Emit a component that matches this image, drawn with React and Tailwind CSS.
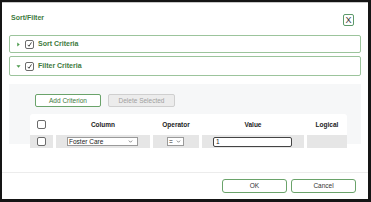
import { useState } from 'react'

const font = { fontFamily: '"Liberation Sans", Arial, sans-serif' }

function Check({ checked }) {
  return (
    <span className="flex h-[9px] w-[9px] items-center justify-center rounded-[2px] border border-[#6b6b6b] bg-white">
      {checked && (
        <svg viewBox="0 0 10 10" className="h-[7px] w-[7px]">
          <path d="M2.5 5.5 L4.3 7.5 L7.8 2" fill="none" stroke="#333" strokeWidth="1.3" />
        </svg>
      )}
    </span>
  )
}

function Caret() {
  return (
    <svg viewBox="0 0 6 4" className="h-[3px] w-[5px]">
      <path d="M0.8 0.8 L3 3 L5.2 0.8" fill="none" stroke="#555" strokeWidth="0.9" />
    </svg>
  )
}

function PanelHeader({ label, open }) {
  return (
    <div className="flex h-full items-center gap-[4px] pl-[6px]">
      <svg viewBox="0 0 6 6" className="h-[5px] w-[5px]">
        {open ? (
          <path d="M0.5 1.5 L5.5 1.5 L3 4.5 Z" fill="#4c9a4c" />
        ) : (
          <path d="M1.5 0.5 L4.5 3 L1.5 5.5 Z" fill="#4c9a4c" />
        )}
      </svg>
      <Check checked />
      <span className="text-[7px] font-bold text-[#3e7a3e]">{label}</span>
    </div>
  )
}

const cols = 'grid grid-cols-[23px_94px_46px_102px_40px] gap-x-[3px]'

export default function App() {
  const [column] = useState('Foster Care')

  return (
    <div
      className="h-[202px] w-[371px] bg-[#151515] pb-[3px] pl-[2px] pr-[3px] pt-[2px]"
      style={font}
    >
      <div className="flex h-full flex-col border-t border-[#c8c8c8] bg-white">
        <div className="flex h-[30px] items-center justify-between pl-[9px] pr-[14px]">
          <span className="text-[7px] font-bold text-[#3e7a3e]">Sort/Filter</span>
          <span className="mt-[4px] flex h-[12px] w-[11px] items-center justify-center rounded-[2px] border border-[#5d9a6a] text-[9px] leading-none text-[#3a3a3a]">
            X
          </span>
        </div>

        <div className="flex flex-col px-[7px]">
          <div className="mt-[2px] h-[18px] rounded-[2px] border border-[#9cc49c]">
            <PanelHeader label="Sort Criteria" />
          </div>
          <div className="mt-[3px] h-[20px] rounded-[2px] border border-[#9cc49c]">
            <PanelHeader label="Filter Criteria" open />
          </div>

          <div className="mt-[8px] h-[60px] bg-[#f6f7f8] pl-[21px] pr-[14px]">
            <div className="flex gap-[7px] pl-[5px] pt-[10px]">
              <span className="flex h-[13px] w-[66px] items-center justify-center rounded-[2px] border border-[#6aa36a] bg-white text-[6.5px] text-[#3e7a3e]">
                Add Criterion
              </span>
              <span className="flex h-[13px] w-[67px] items-center justify-center rounded-[2px] border border-[#cfcfcf] bg-[#ececec] text-[6.5px] text-[#a0a0a0]">
                Delete Selected
              </span>
            </div>
            <div className="mt-[7px] w-[317px] rounded-[3px] bg-white">
              <div className={`${cols} h-[21px] items-center text-[6.5px] font-bold text-[#222]`}>
                <span className="flex justify-center">
                  <Check />
                </span>
                <span className="text-center">Column</span>
                <span className="text-center">Operator</span>
                <span className="text-center">Value</span>
                <span className="text-center">Logical</span>
              </div>
              <div className={`${cols} h-[13px] text-[6.5px] text-[#222]`}>
                <span className="flex items-center justify-center bg-[#e6e6e6]">
                  <Check />
                </span>
                <span className="flex items-center bg-[#e6e6e6] pl-[11px]">
                  <span className="flex h-[9px] w-[71px] items-center justify-between border border-[#9a9a9a] bg-white pl-[1px] pr-[4px]">
                    {column}
                    <Caret />
                  </span>
                </span>
                <span className="flex items-center bg-[#e6e6e6] pl-[14px]">
                  <span className="flex h-[9px] w-[17px] items-center justify-between border border-[#9a9a9a] bg-white pl-[1px] pr-[2px]">
                    =
                    <Caret />
                  </span>
                </span>
                <span className="flex items-center bg-[#e6e6e6] pl-[11px]">
                  <span className="flex h-[10px] w-[79px] items-center rounded-[2px] border border-[#444] bg-white pl-[2px]">
                    1
                  </span>
                </span>
                <span className="bg-[#e6e6e6]" />
              </div>
            </div>
          </div>
        </div>

        <div className="mt-[28px] border-t border-[#ececec]" />
        <div className="flex justify-end gap-[4px] pr-[12px] pt-[6px]">
          <span className="flex h-[14px] w-[65px] items-center justify-center rounded-[3px] border border-[#6aa36a] text-[6.5px] text-[#333]">
            OK
          </span>
          <span className="flex h-[14px] w-[65px] items-center justify-center rounded-[3px] border border-[#6aa36a] text-[6.5px] text-[#333]">
            Cancel
          </span>
        </div>
      </div>
    </div>
  )
}
